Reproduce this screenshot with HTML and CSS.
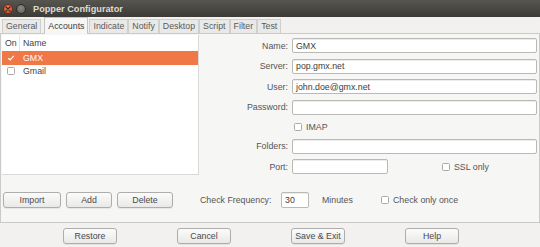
FILE: index.html
```html
<!DOCTYPE html>
<html>
<head>
<meta charset="utf-8">
<link rel="stylesheet" href="styles.css">
</head>
<body>
<div class="window">
  <div class="titlebar">
    <span class="wbtn close"><svg width="6" height="6" viewBox="0 0 6 6"><path d="M1 1L5 5M5 1L1 5" stroke="#3b2a24" stroke-width="1.3" stroke-linecap="round"/></svg></span>
    <span class="wbtn min"></span>
    <span class="title">Popper Configurator</span>
  </div>
  <div class="tabs">
    <span class="tab">General</span>
    <span class="tab active">Accounts</span>
    <span class="tab">Indicate</span>
    <span class="tab">Notify</span>
    <span class="tab">Desktop</span>
    <span class="tab">Script</span>
    <span class="tab">Filter</span>
    <span class="tab">Test</span>
  </div>
  <div class="panel">
    <div class="top">
      <div class="list">
        <div class="list-head"><span class="col-on">On</span><span class="col-name">Name</span></div>
        <div class="row sel"><span class="col-on"><span class="cb on"><svg width="8" height="8" viewBox="0 0 8 8"><path d="M1.2 4.2L3.2 6L6.8 1.8" fill="none" stroke="#fff" stroke-width="1.2"/></svg></span></span><span class="col-name">GMX</span></div>
        <div class="row"><span class="col-on"><span class="cb"></span></span><span class="col-name">Gmail</span></div>
      </div>
      <div class="form">
        <label class="lbl">Name:</label><div class="inp">GMX</div>
        <label class="lbl">Server:</label><div class="inp">pop.gmx.net</div>
        <label class="lbl">User:</label><div class="inp">john.doe@gmx.net</div>
        <label class="lbl">Password:</label><div class="inp"></div>
        <span></span><div class="check"><span class="cb"></span><span>IMAP</span></div>
        <label class="lbl">Folders:</label><div class="inp"></div>
        <label class="lbl">Port:</label>
        <div class="portrow"><div class="inp port"></div><div class="check ssl"><span class="cb"></span><span>SSL only</span></div></div>
      </div>
    </div>
    <div class="bottom">
      <button class="btn w-import">Import</button>
      <button class="btn w-add">Add</button>
      <button class="btn w-delete">Delete</button>
      <span class="freq-lbl">Check Frequency:</span>
      <div class="inp freq">30</div>
      <span class="minutes">Minutes</span>
      <div class="check"><span class="cb"></span><span>Check only once</span></div>
    </div>
  </div>
  <div class="actions">
    <button class="btn act">Restore</button>
    <button class="btn act">Cancel</button>
    <button class="btn act">Save &amp; Exit</button>
    <button class="btn act">Help</button>
  </div>
</div>
</body>
</html>
```
FILE: styles.css
```css
* { box-sizing: border-box; }
html, body { margin: 0; padding: 0; }
body {
  width: 540px;
  height: 247px;
  overflow: hidden;
  background: #f2f1f0;
  font-family: "Liberation Sans", Arial, sans-serif;
  font-size: 8.8px;
  color: #444;
}
.window { width: 540px; height: 247px; display: flex; flex-direction: column; }

.titlebar {
  height: 17px;
  background: linear-gradient(#56554f, #3c3b37);
  display: flex;
  align-items: center;
  padding-left: 3px;
}
.wbtn {
  width: 10px; height: 10px; border-radius: 50%;
  display: inline-flex; align-items: center; justify-content: center;
}
.wbtn.close { background: radial-gradient(circle at 50% 35%, #f17e5a, #d5431c); border: 1px solid #6b2a19; }
.wbtn.min { background: radial-gradient(circle at 50% 35%, #8a8983, #5e5d59); border: 1px solid #2e2d2a; margin-left: 3px; }
.title { color: #dfdbd2; font-weight: bold; font-size: 9.2px; margin-left: 7px; }

.tabs {
  height: 16px;
  display: flex;
  align-items: flex-end;
  padding-left: 2px;
  position: relative;
  z-index: 1;
}
.tab {
  height: 14px;
  padding: 0 3px;
  border: 1px solid #cfcfcd;
  border-bottom: none;
  background: #e9e9e8;
  color: #5a5a5a;
  display: flex;
  align-items: center;
  line-height: 1;
}
.tab.active {
  height: 17px;
  margin-bottom: -1px;
  background: #f6f6f5;
  color: #3c3c3c;
  padding: 0 3px;
  margin-left: 3px;
  margin-right: 1px;
  border-color: #c4c4c2;
}

.panel {
  width: 540px;
  height: 190px;
  border: 1px solid #cacac8;
  background: #f6f6f5;
  display: flex;
  flex-direction: column;
}
.top { display: flex; height: 141px; padding-top: 1px; }
.list {
  margin-left: 1px;
  width: 197px;
  height: 140px;
  background: #fff;
  border: 1px solid #d9d9d7;
  border-left: none;
  border-top: none;
}
.list-head { height: 16px; display: flex; align-items: center; color: #444; }
.col-on { width: 18px; padding-left: 3px; display: flex; align-items: center; height: 100%; border-right: 1px solid #e6e6e4; }
.row .col-on { border-right: none; padding-left: 5px; }
.col-name { padding-left: 3px; }
.row { height: 13.5px; display: flex; align-items: center; }
.row.sel { background: #f07746; color: #fff; }
.cb {
  width: 8px; height: 8px;
  border: 1px solid #a9a9a7;
  border-radius: 1.5px;
  background: #fff;
  display: inline-flex; align-items: center; justify-content: center;
}
.cb.on { border: none; background: transparent; }

.form {
  flex: 1;
  padding: 3px 2px 0 0;
  display: grid;
  grid-template-columns: 89px 1fr;
  grid-template-rows: 15px 15px 15px 15px 13px 15px 15px;
  column-gap: 4px;
  row-gap: 5.5px;
  align-content: start;
}
.lbl { text-align: right; align-self: center; color: #555; }
.inp {
  height: 15px;
  background: #fff;
  border: 1px solid #b9b9b6;
  border-radius: 2px;
  padding-left: 3px;
  display: flex; align-items: center;
  color: #3c3c3c;
  box-shadow: inset 0 1px 0 #ececec;
}
.check { display: flex; align-items: center; gap: 4px; color: #555; }
.form .check { padding-left: 2px; }
.portrow { display: flex; align-items: center; }
.inp.port { width: 96px; }
.check.ssl { margin-left: 52px; }

.bottom {
  margin-top: 16.5px;
  height: 16px;
  display: flex;
  align-items: center;
  padding-left: 2px;
}
.btn {
  height: 16px;
  font: inherit;
  color: #4a4a4a;
  background: linear-gradient(#fbfbfb, #e9e9e8);
  border: 1px solid #adadab;
  border-radius: 3px;
  padding: 0;
  box-shadow: 0 1px 0 rgba(0,0,0,0.06);
}
.w-import { width: 58px; }
.w-add { width: 46px; margin-left: 5px; }
.w-delete { width: 56px; margin-left: 5px; }
.freq-lbl { margin-left: 27px; width: 81px; color: #555; }
.inp.freq { width: 28px; height: 16px; }
.minutes { margin-left: 13px; width: 59px; color: #555; }

.actions {
  margin-top: 4.5px;
  display: flex;
  padding-left: 63px;
  gap: 60px;
}
.btn.act { width: 54px; height: 16px; }
```
